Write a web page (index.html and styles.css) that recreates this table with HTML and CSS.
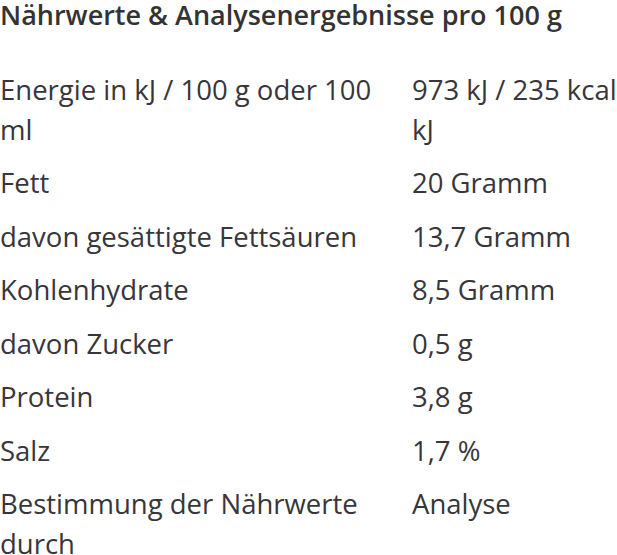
FILE: index.html
```html
<!DOCTYPE html>
<html lang="de">
<head>
<meta charset="utf-8">
<title>Nährwerte</title>
<link rel="stylesheet" href="styles.css">
</head>
<body>
<section class="nutrition">
  <h2 class="nutrition-title">Nährwerte &amp; Analysenergebnisse pro 100 g</h2>
  <table class="nutrition-table">
    <tbody>
      <tr><td class="label">Energie in kJ / 100 g oder 100 ml</td><td class="value">973 kJ / 235 kcal kJ</td></tr>
      <tr><td class="label">Fett</td><td class="value">20 Gramm</td></tr>
      <tr><td class="label">davon gesättigte Fettsäuren</td><td class="value">13,7 Gramm</td></tr>
      <tr><td class="label">Kohlenhydrate</td><td class="value">8,5 Gramm</td></tr>
      <tr><td class="label">davon Zucker</td><td class="value">0,5 g</td></tr>
      <tr><td class="label">Protein</td><td class="value">3,8 g</td></tr>
      <tr><td class="label">Salz</td><td class="value">1,7 %</td></tr>
      <tr><td class="label">Bestimmung der Nährwerte durch</td><td class="value">Analyse</td></tr>
    </tbody>
  </table>
</section>
</body>
</html>
```
FILE: styles.css
```css
html, body {
  margin: 0;
  padding: 0;
  background: #ffffff;
  overflow: hidden;
}
body {
  font-family: "Open Sans", "Liberation Sans", sans-serif;
  color: #38363a;
}
.nutrition-title {
  margin: 0;
  font-size: 27px;
  font-weight: 600;
  line-height: 30px;
  color: #333333;
}
.nutrition-table {
  border-collapse: collapse;
  margin-top: 33px;
  width: 625px;
  table-layout: fixed;
}
.nutrition-table td {
  font-size: 27.5px;
  line-height: 40px;
  padding: 6.75px 0;
  vertical-align: top;
}
.nutrition-table .label {
  width: 412px;
  padding-right: 30px;
  box-sizing: border-box;
}
.nutrition-table .value {
  width: 213px;
}
```
